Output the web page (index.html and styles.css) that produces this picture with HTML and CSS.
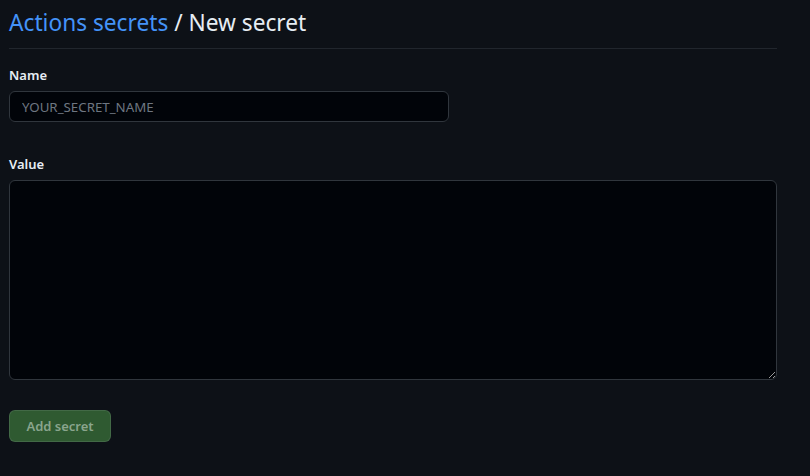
FILE: index.html
```html
<!DOCTYPE html>
<html lang="en">
<head>
<meta charset="UTF-8">
<meta name="viewport" content="width=device-width, initial-scale=1.0">
<title>New secret</title>
<link rel="stylesheet" href="styles.css">
</head>
<body>
<div class="page">
  <div class="subhead">
    <h2 class="subhead-title"><a href="#">Actions secrets</a> / New secret</h2>
  </div>
  <form class="secret-form">
    <div class="field">
      <label for="secretName">Name</label>
      <input type="text" id="secretName" class="name-input" placeholder="YOUR_SECRET_NAME">
    </div>
    <div class="field field-value">
      <label for="secretValue">Value</label>
      <textarea id="secretValue" class="value-input"></textarea>
    </div>
    <button type="submit" class="btn-primary" disabled>Add secret</button>
  </form>
</div>
</body>
</html>
```

FILE: styles.css
```css
body {
  margin: 0;
  background-color: #0d1117;
  color: #e6edf3;
  font-family: "Noto Sans", "Open Sans", sans-serif;
  font-size: 14px;
}
.page {
  width: 768px;
  padding: 6px 0 0 9px;
}
.subhead {
  border-bottom: 1px solid #21262d;
  padding-bottom: 8px;
  margin-bottom: 16px;
}
.subhead-title {
  margin: 0;
  font-size: 22.7px;
  font-weight: 400;
  line-height: 34px;
  color: #e6edf3;
}
.subhead-title a {
  color: #4493f8;
  text-decoration: none;
}
.field {
  display: flex;
  flex-direction: column;
  align-items: flex-start;
}
.field label {
  font-size: 13px;
  font-weight: 600;
  line-height: 20px;
  margin-bottom: 6px;
  color: #e6edf3;
}
.field-value {
  margin-top: 32px;
}
.name-input,
.value-input {
  box-sizing: border-box;
  background-color: #010409;
  border: 1px solid #30363d;
  border-radius: 6px;
  color: #e6edf3;
  font-family: inherit;
  font-size: 13.3px;
  padding: 5px 12px;
}
.name-input {
  width: 440px;
  height: 31px;
}
.name-input::placeholder {
  color: #6e7681;
}
.value-input {
  width: 768px;
  height: 200px;
  resize: vertical;
}
.btn-primary {
  margin-top: 30px;
  width: 102px;
  height: 32px;
  background-color: #2f5a31;
  color: #8aa58d;
  border: 1px solid rgba(240, 246, 252, 0.1);
  border-radius: 6px;
  font-family: inherit;
  font-size: 13px;
  font-weight: 600;
}
```
